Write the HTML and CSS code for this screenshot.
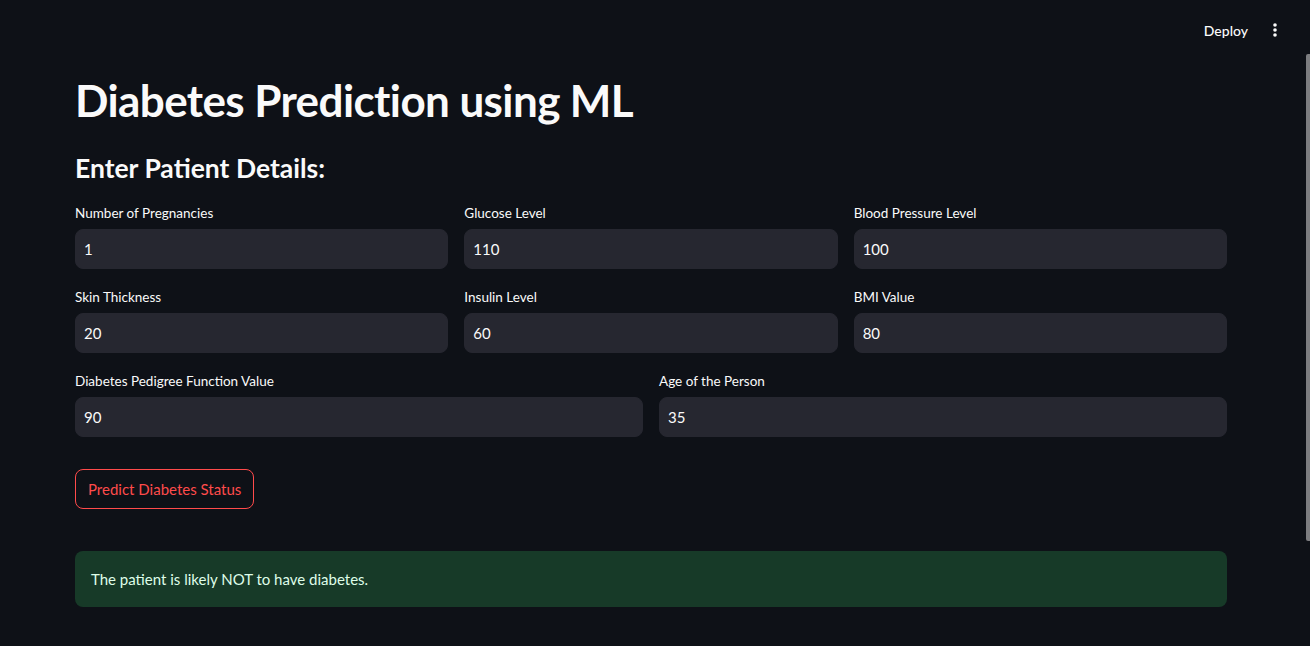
FILE: index.html
```html
<!DOCTYPE html>
<html lang="en">
<head>
<meta charset="utf-8">
<title>Diabetes Prediction using ML</title>
<link rel="stylesheet" href="styles.css">
</head>
<body>
<header class="topbar">
  <button class="deploy">Deploy</button>
  <button class="kebab" aria-label="Main menu">
    <svg width="4" height="14" viewBox="0 0 4 14"><circle cx="2" cy="2" r="1.8" fill="#fafafa"/><circle cx="2" cy="7" r="1.8" fill="#fafafa"/><circle cx="2" cy="12" r="1.8" fill="#fafafa"/></svg>
  </button>
</header>
<div class="scroll-thumb"></div>
<main class="main">
  <h1 class="title">Diabetes Prediction using ML</h1>
  <h2 class="subtitle">Enter Patient Details:</h2>

  <div class="row cols-3">
    <div class="field"><label class="label">Number of Pregnancies</label><input class="input" value="1"></div>
    <div class="field"><label class="label">Glucose Level</label><input class="input" value="110"></div>
    <div class="field"><label class="label">Blood Pressure Level</label><input class="input" value="100"></div>
  </div>
  <div class="row cols-3">
    <div class="field"><label class="label">Skin Thickness</label><input class="input" value="20"></div>
    <div class="field"><label class="label">Insulin Level</label><input class="input" value="60"></div>
    <div class="field"><label class="label">BMI Value</label><input class="input" value="80"></div>
  </div>
  <div class="row cols-2">
    <div class="field"><label class="label">Diabetes Pedigree Function Value</label><input class="input" value="90"></div>
    <div class="field"><label class="label">Age of the Person</label><input class="input" value="35"></div>
  </div>

  <div class="actions">
    <button class="predict">Predict Diabetes Status</button>
  </div>

  <div class="alert-success">The patient is likely NOT to have diabetes.</div>
</main>
</body>
</html>
```

FILE: styles.css
```css
* { box-sizing: border-box; }

html, body {
  margin: 0;
  padding: 0;
  background: #0e1117;
  color: #fafafa;
  font-family: "Lato", "Open Sans", "Liberation Sans", sans-serif;
  overflow: hidden;
}

.topbar {
  height: 60px;
  display: flex;
  justify-content: flex-end;
  align-items: center;
  padding-right: 21px;
  gap: 5px;
}

.deploy {
  background: transparent;
  border: none;
  color: #fafafa;
  font-family: inherit;
  font-size: 14px;
  font-weight: 500;
  padding: 4px 8px;
  cursor: pointer;
}

.kebab {
  background: transparent;
  border: none;
  width: 28px;
  height: 28px;
  display: flex;
  align-items: center;
  justify-content: center;
  padding: 0;
}

.scroll-thumb {
  position: fixed;
  top: 54px;
  right: 0;
  width: 4px;
  height: 487px;
  background: #7c7d80;
  border-radius: 2px 0 0 2px;
}

.main {
  padding: 14px 83px 0 75px;
}

.title {
  margin: 0;
  font-size: 44px;
  line-height: 52px;
  font-weight: 700;
  letter-spacing: -0.6px;
}

.subtitle {
  margin: 24px 0 17px;
  font-size: 26.5px;
  line-height: 36px;
  font-weight: 700;
}

.row {
  display: grid;
  gap: 16px;
  margin-bottom: 18px;
}
.cols-3 { grid-template-columns: repeat(3, 1fr); }
.cols-2 { grid-template-columns: repeat(2, 1fr); }

.field {
  display: flex;
  flex-direction: column;
}

.label {
  font-size: 13.5px;
  line-height: 20px;
  height: 20px;
  margin-bottom: 6px;
  color: #fafafa;
}

.input {
  height: 40px;
  width: 100%;
  background: #262730;
  border: 1px solid #262730;
  border-radius: 8px;
  color: #fafafa;
  font-family: inherit;
  font-size: 15px;
  padding: 0 8px;
  outline: none;
}

.actions {
  margin-top: 32px;
  display: flex;
}

.predict {
  height: 40px;
  padding: 0 12px;
  background: transparent;
  border: 1px solid #ff4b4b;
  border-radius: 8px;
  color: #ff4b4b;
  font-family: inherit;
  font-size: 15px;
}

.alert-success {
  margin-top: 42px;
  height: 56px;
  display: flex;
  align-items: center;
  padding: 0 16px;
  background: #173a28;
  border-radius: 8px;
  color: #dffde9;
  font-size: 15px;
}
```
